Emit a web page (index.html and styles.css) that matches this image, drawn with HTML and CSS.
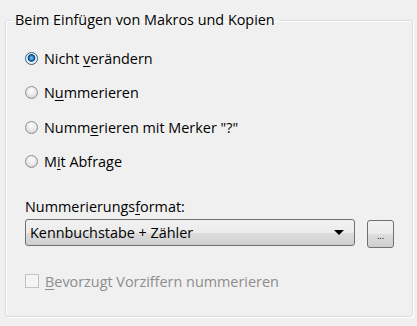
FILE: index.html
```html
<!DOCTYPE html>
<html lang="de">
<head>
    <meta charset="UTF-8">
    <title>Nummerierung</title>
    <link rel="stylesheet" href="styles.css">
</head>
<body>

    <fieldset class="group">
        <legend class="group-title">Beim Einfügen von Makros und Kopien</legend>

        <div class="options">
            <label class="option"><span class="radio checked"></span><span>Nicht <u>v</u>erändern</span></label>
            <label class="option"><span class="radio"></span><span>N<u>u</u>mmerieren</span></label>
            <label class="option"><span class="radio"></span><span>Numm<u>e</u>rieren mit Merker "?"</span></label>
            <label class="option"><span class="radio"></span><span>M<u>i</u>t Abfrage</span></label>
        </div>

        <div class="format">
            <div class="format-label">Nummerierungs<u>f</u>ormat:</div>
            <div class="format-row">
                <div class="combo">
                    <span class="combo-text">Kennbuchstabe + Zähler</span>
                    <span class="combo-arrow"></span>
                </div>
                <div class="more-btn">...</div>
            </div>
        </div>

        <label class="check disabled"><span class="checkbox"></span><span><u>B</u>evorzugt Vorziffern nummerieren</span></label>
    </fieldset>

</body>
</html>
```

FILE: styles.css
```css
body {
    margin: 0;
    background-color: #f0f0f0;
    font-family: "Open Sans", "Noto Sans", sans-serif;
    font-size: 14.4px;
    color: #000;
    width: 417px;
    height: 326px;
    overflow: hidden;
}

u {
    text-decoration: underline;
    text-underline-offset: 2px;
}

.group {
    margin: 11px 4px 0 5px;
    height: 306px;
    padding: 0 18px 0 19px;
    border: 1px solid #d5dfe5;
    box-shadow: inset 1px 1px 0 #fff, 1px 1px 0 #fff;
    border-radius: 3px;
    box-sizing: border-box;
}

.group-title {
    padding: 0 4px;
    margin-left: -14px;
    line-height: 18px;
}

.options {
    display: flex;
    flex-direction: column;
    gap: 14px;
    margin-top: 19px;
}

.option {
    display: flex;
    align-items: center;
    gap: 6px;
    height: 20.5px;
}

.radio {
    width: 11px;
    height: 11px;
    border-radius: 50%;
    border: 1px solid #8e8f8f;
    background: radial-gradient(circle at 50% 35%, #ffffff 0%, #e6e6e6 55%, #c4c4c4 100%);
}

.radio.checked {
    background: radial-gradient(circle at 50% 45%, #7fd0fa 0%, #1d74bd 30%, #0c3e73 42%, #f4f4f4 52%, #dcdcdc 100%);
    border-color: #2c628b;
}

.format {
    margin-top: 25px;
}

.format-label {
    line-height: 20px;
}

.format-row {
    display: flex;
    align-items: flex-start;
    gap: 12px;
    margin-top: 2px;
}

.combo {
    width: 330px;
    height: 27px;
    border: 1px solid #707070;
    border-radius: 3px;
    background: linear-gradient(#f2f2f2 0%, #ebebeb 50%, #dddddd 51%, #cfcfcf 100%);
    display: flex;
    align-items: center;
    justify-content: space-between;
    padding: 0 10px 0 4px;
    box-sizing: border-box;
}

.combo-arrow {
    width: 0;
    height: 0;
    border-left: 5px solid transparent;
    border-right: 5px solid transparent;
    border-top: 5px solid #000;
}

.more-btn {
    width: 27px;
    height: 28px;
    box-sizing: border-box;
    border: 1px solid #707070;
    border-radius: 3px;
    background: linear-gradient(#f2f2f2 0%, #ebebeb 50%, #dddddd 51%, #cfcfcf 100%);
    font-size: 9px;
    text-align: center;
    line-height: 30px;
    margin-top: 1px;
}

.check {
    display: flex;
    align-items: center;
    gap: 6px;
    margin-top: 23px;
    height: 20px;
}

.check.disabled {
    color: #8d8d8d;
}

.checkbox {
    width: 12px;
    height: 12px;
    border: 1px solid #c3c3c3;
    background: #f4f4f4;
}
```
